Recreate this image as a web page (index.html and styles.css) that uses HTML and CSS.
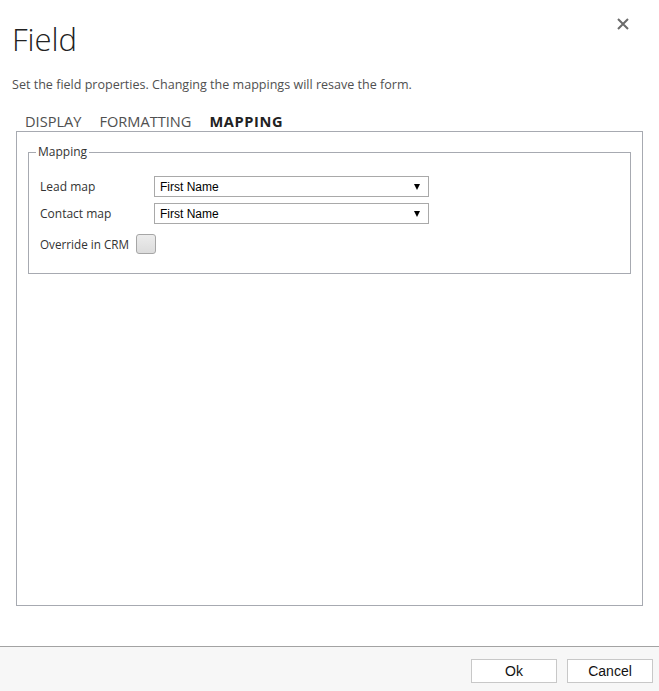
FILE: index.html
```html
<!DOCTYPE html>
<html lang="en">

<head>
    <meta charset="UTF-8">
    <meta name="viewport" content="width=device-width, initial-scale=1.0">
    <title>Field</title>
    <link rel="stylesheet" href="styles.css">
</head>

<body>
    <div class="dialog">
        <button class="close-btn" title="Close">
            <svg width="12" height="12" viewBox="0 0 12 12">
                <path d="M1 1 L11 11 M11 1 L1 11" stroke="#6b6b6b" stroke-width="2" fill="none" />
            </svg>
        </button>

        <h1 class="dialog-title">Field</h1>
        <p class="dialog-desc">Set the field properties. Changing the mappings will resave the form.</p>

        <div class="tabs">
            <span class="tab">DISPLAY</span>
            <span class="tab">FORMATTING</span>
            <span class="tab active">MAPPING</span>
        </div>

        <div class="tab-panel">
            <fieldset class="group">
                <legend>Mapping</legend>

                <div class="map-row">
                    <span class="map-label">Lead map</span>
                    <div class="dropdown">
                        <span>First Name</span>
                        <span class="arrow"></span>
                    </div>
                </div>

                <div class="map-row">
                    <span class="map-label">Contact map</span>
                    <div class="dropdown">
                        <span>First Name</span>
                        <span class="arrow"></span>
                    </div>
                </div>

                <div class="check-row">
                    <span>Override in CRM</span>
                    <span class="checkbox"></span>
                </div>
            </fieldset>
        </div>

        <div class="dialog-footer">
            <button class="btn">Ok</button>
            <button class="btn">Cancel</button>
        </div>
    </div>
</body>

</html>
```

FILE: styles.css
```css
* {
    margin: 0;
    padding: 0;
    box-sizing: border-box;
}

body {
    font-family: 'Open Sans', 'Noto Sans', sans-serif;
    background: #ffffff;
    color: #444444;
}

.dialog {
    position: relative;
    height: 691px;
    display: flex;
    flex-direction: column;
}

.close-btn {
    position: absolute;
    top: 18px;
    right: 30px;
    width: 12px;
    height: 12px;
    border: none;
    background: none;
    cursor: pointer;
    display: flex;
}

.dialog-title {
    margin: 19px 0 0 12px;
    font-size: 31px;
    font-weight: 300;
    line-height: 40px;
    color: #222222;
}

.dialog-desc {
    margin: 17px 0 0 12px;
    font-size: 12.55px;
    line-height: 18px;
    color: #505050;
}

.tabs {
    display: flex;
    gap: 18px;
    margin: 18px 0 0 25px;
    font-size: 14.6px;
    line-height: 19px;
    color: #505050;
}

.tab.active {
    font-weight: 700;
    letter-spacing: 0.6px;
    color: #222222;
}

.tab-panel {
    flex: 1;
    margin: 0 16px 40px 16px;
    border: 1px solid #a7aab1;
    padding: 0 11px;
}

.group {
    margin-top: 13px;
    border: 1px solid #a7aab1;
    padding: 17px 0 19px 11px;
    font-size: 12px;
    color: #333333;
}

.group legend {
    margin-left: -4px;
    padding: 0 2px;
    line-height: 14px;
    color: #333333;
}

.map-row {
    display: flex;
    align-items: center;
    margin-bottom: 6px;
}

.map-label {
    width: 114px;
}

.dropdown {
    width: 275px;
    height: 21px;
    border: 1px solid #a9a9a9;
    background: #ffffff;
    display: flex;
    align-items: center;
    justify-content: space-between;
    padding: 0 8px 0 5px;
    font-family: 'Liberation Sans', Arial, sans-serif;
    font-size: 12px;
    color: #000000;
}

.arrow {
    width: 0;
    height: 0;
    border-left: 3.5px solid transparent;
    border-right: 3.5px solid transparent;
    border-top: 6px solid #000000;
}

.check-row {
    display: flex;
    align-items: center;
    gap: 7px;
    margin-top: 10px;
    font-size: 11.7px;
}

.checkbox {
    width: 20px;
    height: 20px;
    border: 1px solid #a6a6a6;
    border-radius: 3px;
    background: linear-gradient(#ececec, #dcdcdc);
}

.dialog-footer {
    height: 45px;
    border-top: 1px solid #a3a3a3;
    background: #f7f7f7;
    display: flex;
    justify-content: flex-end;
    gap: 10px;
    padding: 12px 6px 0 0;
}

.btn {
    width: 86px;
    height: 24px;
    border: 1px solid #c8c8c8;
    background: #ffffff;
    font-family: 'Liberation Sans', Arial, sans-serif;
    font-size: 14px;
    color: #111111;
    cursor: pointer;
}
```
